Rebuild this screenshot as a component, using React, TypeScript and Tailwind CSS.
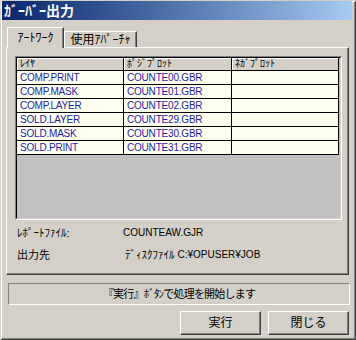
import React from "react";

const rows = [
  ["COMP.PRINT", "COUNTE00.GBR"],
  ["COMP.MASK", "COUNTE01.GBR"],
  ["COMP.LAYER", "COUNTE02.GBR"],
  ["SOLD.LAYER", "COUNTE29.GBR"],
  ["SOLD.MASK", "COUNTE30.GBR"],
  ["SOLD.PRINT", "COUNTE31.GBR"],
];

export default function App() {
  return (
    <div className="w-[356px] h-[340px] bg-[#d4d0c8] flex flex-col pl-[2px] pt-[1px] text-black font-['Liberation_Sans','Noto_Sans_CJK_JP',sans-serif] shadow-[inset_1px_1px_0_#d4d0c8,inset_-1px_-1px_0_#404040,inset_2px_2px_0_#ffffff,inset_-2px_-2px_0_#808080] overflow-hidden">
      {/* title bar */}
      <div className="w-[350px] h-[19px] shrink-0 bg-gradient-to-r from-[#0a246a] to-[#a6caf0] flex items-center pl-[2px]">
        <span className="text-white font-bold text-[14px] leading-none">ｶﾞｰﾊﾞｰ出力</span>
      </div>

      {/* tabs */}
      <div className="ml-[4px] mt-[7px] h-[20px] flex items-end shrink-0">
        <div className="relative z-10 ml-[1px] -mb-[1px] w-[57px] h-[21px] bg-[#d4d0c8] border-l border-t border-white border-r border-r-[#404040] shadow-[inset_-1px_0_0_#808080] flex items-center justify-center pb-[1px]">
          <span className="text-[12px] leading-none">ｱｰﾄﾜｰｸ</span>
        </div>
        <div className="w-[73px] h-[16px] bg-[#d4d0c8] border-l border-t border-white border-r border-r-[#404040] shadow-[inset_-1px_0_0_#808080] flex items-center justify-center">
          <span className="text-[12px] leading-none">使用ｱﾊﾟｰﾁｬ</span>
        </div>
      </div>

      {/* panel */}
      <div className="ml-[4px] w-[343px] h-[228px] shrink-0 border-l border-t border-white border-r border-b border-r-[#404040] border-b-[#404040] shadow-[inset_-1px_-1px_0_#808080] flex flex-col">
        {/* grid */}
        <div className="ml-[8px] mt-[8px] w-[327px] h-[164px] border border-t-[#808080] border-l-[#808080] border-r-white border-b-white">
          <div className="w-full h-full border border-t-black border-l-black border-r-[#d4d0c8] border-b-[#d4d0c8] bg-[#c0c0c0]">
            <div className="grid grid-cols-[107px_108px_107px]">
              {["ﾚｲﾔ", "ﾎﾟｼﾞﾌﾟﾛｯﾄ", "ﾈｶﾞﾌﾟﾛｯﾄ"].map((h) => (
                <div
                  key={h}
                  className="h-[13px] bg-[#d4d0c8] border-r border-b border-black flex items-center pl-[3px] shadow-[inset_1px_1px_0_#ffffff]"
                >
                  <span className="text-[10px] leading-none">{h}</span>
                </div>
              ))}
              {rows.map(([a, b]) => (
                <React.Fragment key={a}>
                  <div className="h-[14px] bg-[#fffff0] border-r border-b border-black flex items-center pl-[3px]">
                    <span className="text-[10px] leading-none text-[#1c1ca8] tracking-[-0.2px]">{a}</span>
                  </div>
                  <div className="h-[14px] bg-[#fffff0] border-r border-b border-black flex items-center pl-[3px]">
                    <span className="text-[10px] leading-none text-[#1c1ca8] tracking-[-0.2px]">{b}</span>
                  </div>
                  <div className="h-[14px] bg-[#fffff0] border-r border-b border-black" />
                </React.Fragment>
              ))}
            </div>
          </div>
        </div>

        {/* info rows */}
        <div className="ml-[10px] mt-[6px] grid grid-cols-[106px_1fr] gap-y-[8px]">
          <div className="h-[14px] flex items-center">
            <span className="text-[11px] leading-none">ﾚﾎﾟｰﾄﾌｧｲﾙ:</span>
          </div>
          <div className="h-[14px] flex items-center">
            <span className="text-[10px] leading-none">COUNTEAW.GJR</span>
          </div>
          <div className="h-[14px] flex items-center">
            <span className="text-[11px] leading-none">出力先</span>
          </div>
          <div className="h-[14px] flex items-center pl-[2px]">
            <span className="text-[11px] leading-none">ﾃﾞｨｽｸﾌｧｲﾙ</span>
            <span className="text-[10px] leading-none ml-[3px]">C:¥OPUSER¥JOB</span>
          </div>
        </div>
      </div>

      {/* status */}
      <div className="ml-[6px] mt-[8px] w-[342px] h-[22px] shrink-0 border border-t-[#808080] border-l-[#808080] border-r-white border-b-white flex items-center justify-center">
        <span className="text-[11px] leading-none tracking-[-0.8px]">『実行』ﾎﾞﾀﾝで処理を開始します</span>
      </div>

      {/* buttons */}
      <div className="mt-[6px] flex gap-[7px] ml-[178px] shrink-0">
        {["実行", "閉じる"].map((t) => (
          <div
            key={t}
            className="w-[81px] h-[24px] border border-t-white border-l-white border-r-[#404040] border-b-[#404040] shadow-[inset_-1px_-1px_0_#808080] flex items-center justify-center"
          >
            <span className="text-[12px] leading-none">{t}</span>
          </div>
        ))}
      </div>
    </div>
  );
}
